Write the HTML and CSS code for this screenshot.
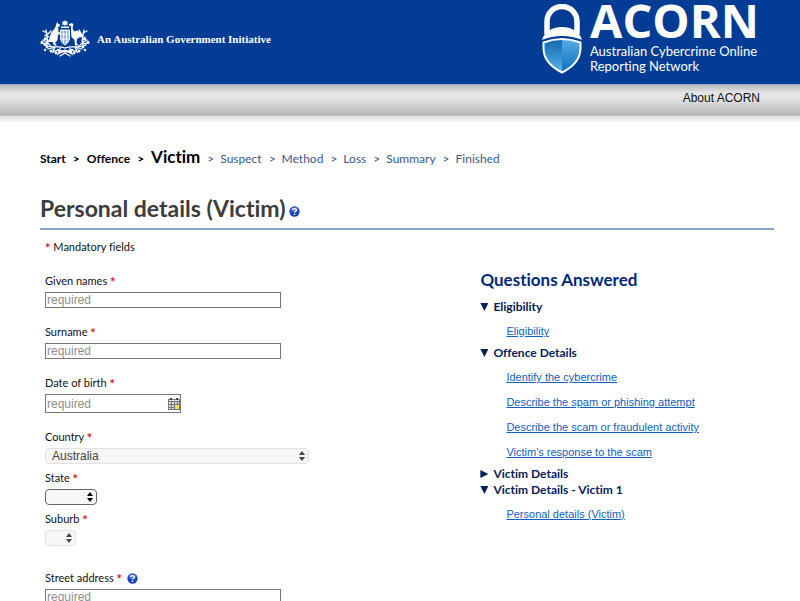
FILE: index.html
```html
<!DOCTYPE html>
<html lang="en">
<head>
<meta charset="utf-8">
<meta name="viewport" content="width=device-width, initial-scale=1">
<title>ACORN - Personal details (Victim)</title>
<link rel="stylesheet" href="styles.css">
</head>
<body>
<svg class="sprite">
  <symbol id="help" viewBox="0 0 12 12">
    <circle cx="6" cy="6" r="5.6" fill="#1d43b8"/>
    <ellipse cx="6" cy="3.5" rx="4" ry="2.5" fill="#5d83e0" opacity=".7"/>
    <path d="M4 4.600C4 2.300 8 2.300 8 4.500C8 5.800 6 5.800 6 7.200" fill="none" stroke="#fff" stroke-width="1.500"/>
    <circle cx="6" cy="9" r=".9" fill="#fff"/>
  </symbol>
  <symbol id="arrows" viewBox="0 0 6 10"><path d="M0 4L3 0L6 4ZM0 6H6L3 10Z" fill="currentColor"/></symbol>
</svg>
<header class="banner">
  <div class="gov">
    <svg class="arms" viewBox="0 0 50 38" aria-hidden="true">
      <g fill="#fff">
        <path d="M25 0L26 1.500L28 1.500L27.300 3L28 4.700L26 4.800L25 6L24 4.800L22 4.700L22.700 3L22 1.500L24 1.500Z"/>
        <path d="M21 6.500H29V8H21Z"/>
        <path d="M17 2L18.500 4L20 4.500L19.500 6.500L18 7L18.500 12L21.500 13L21 14.500L18 14.500L17.500 20L15 23L17 25.500H14L12.500 22L9 22L5 25.500L4 24.500L9 20L11 13L15 8Z"/>
        <path d="M29 4L32 3L33.500 4.500L32.500 8L34 11.500C38 9.500 42 12 43 18L40 17L37 19L36.500 23L39 25.500H35L34.500 20L31.500 17L31 11L31 6L29 5.500Z"/>
      </g>
      <path d="M20.500 10H29.500V19Q28.500 23 25 25Q21.500 23 20.500 19Z" fill="#9db8e6" stroke="#fff"/>
      <path d="M20.500 14.500H29.500M20.500 19H29.500M23.500 10V24M26.500 10V24" stroke="#fff" stroke-width=".8"/>
      <g fill="none" stroke="#fff" stroke-width="1.300" stroke-linecap="round">
        <path d="M4 25C12 29 18 25 25 28C32 25 38 29 46 25M3 20Q11 24 14 31M1 23L8 24M5 17L8 22L6 10M7 13L3 11M7 15L11 11M9 17L5 15M47 20Q39 24 36 31M49 23L42 24M45 17L42 22L44 10M43 13L47 11M42 15L39 10M8 29L15 27L13 32L20 29L18 34L25 30L32 34L30 29L37 32L35 27L42 29M20 36L25 33L30 36"/>
      </g>
      <g fill="#fff">
        <circle cx="2" cy="22" r="1.300"/><circle cx="5" cy="19" r="1.300"/><circle cx="7" cy="27" r="1.400"/><circle cx="5" cy="30" r="1.200"/><circle cx="11" cy="31" r="1.500"/><circle cx="16" cy="33" r="1.400"/><circle cx="20" cy="32" r="1.300"/>
        <circle cx="48" cy="22" r="1.300"/><circle cx="45" cy="19" r="1.300"/><circle cx="43" cy="27" r="1.400"/><circle cx="45" cy="30" r="1.200"/><circle cx="39" cy="31" r="1.500"/><circle cx="34" cy="33" r="1.400"/><circle cx="30" cy="32" r="1.300"/>
        <path d="M17 29Q25 32 33 29V31Q25 34 17 31Z"/>
      </g>
    </svg>
    <span class="gov-text">An Australian Government Initiative</span>
  </div>
  <div class="brand">
    <svg class="lock" viewBox="0 0 40 70" aria-hidden="true">
      <defs>
        <linearGradient id="left" x1="0" y1="0" x2="0" y2="1"><stop offset="0" stop-color="#1566b0"/><stop offset="1" stop-color="#53b4e8"/></linearGradient>
        <linearGradient id="right" x1="0" y1="0" x2="0" y2="1"><stop offset="0" stop-color="#5aaee6"/><stop offset="1" stop-color="#0b6bbd"/></linearGradient>
      </defs>
      <path d="M5 30V17.500A15 15 0 0 1 35 17.500V30" fill="none" stroke="#fff" stroke-width="5.500"/>
      <path d="M0 36C2 28.500 9 23 20 23S38 28.500 40 36Q20 28 0 36Z" fill="#fff"/>
      <path d="M1.500 38.500Q20 31.500 38.500 38.500V44C38.500 55 32 62.500 20 68.500C8 62.500 1.500 55 1.500 44Z" fill="url(#left)"/>
      <path d="M20 35Q30 35 38.500 38.500V44C38.500 55 32 62.500 20 68.500Z" fill="url(#right)"/>
      <path d="M1 36.500Q20 29.500 39 36.500" fill="none" stroke="#023c94" stroke-width="1.500"/>
      <path d="M1.500 38.500Q20 31.500 38.500 38.500V44C38.500 55 32 62.500 20 68.500C8 62.500 1.500 55 1.500 44Z" fill="none" stroke="#fff" stroke-width="2"/>
    </svg>
    <div>
      <div class="brand-name">ACORN</div>
      <div class="brand-sub">Australian Cybercrime Online<br>Reporting Network</div>
    </div>
  </div>
</header>
<nav class="topnav"><a href="#">About ACORN</a></nav>
<main class="page">
  <nav aria-label="Progress">
    <ol class="steps">
      <li class="done">Start</li>
      <li class="done">Offence</li>
      <li class="done"><span class="current">Victim</span></li>
      <li>Suspect</li>
      <li>Method</li>
      <li>Loss</li>
      <li>Summary</li>
      <li>Finished</li>
    </ol>
  </nav>
  <h1 class="title">Personal details (Victim)<button class="help" type="button" aria-label="Help"><svg><use href="#help"/></svg></button></h1>
  <div class="columns">
    <form class="form">
      <p class="note"><span class="star">*</span> Mandatory fields</p>
      <div class="field"><label for="given">Given names <span class="star">*</span></label><input id="given" class="text" type="text" placeholder="required"></div>
      <div class="field"><label for="surname">Surname <span class="star">*</span></label><input id="surname" class="text" type="text" placeholder="required"></div>
      <div class="field">
        <label for="dob">Date of birth <span class="star">*</span></label>
        <div class="date">
          <input id="dob" type="text" placeholder="required">
          <button type="button" aria-label="Choose date"><svg viewBox="0 0 12 12"><path d="M0 1H12V12H0Z" fill="#777"/><path d="M2 0H4V2H2ZM8 0H10V2H8Z" fill="#444"/><path d="M1 2H11V3H1ZM1 4H3V6H1ZM4 4H6V6H4ZM7 4H9V6H7ZM10 4H11V6H10ZM1 7H3V9H1ZM4 7H6V9H4ZM1 10H3V11H1ZM4 10H6V11H4Z" fill="#ddd"/><path d="M7 7H11V11H7Z" fill="#f3df62"/></svg></button>
        </div>
      </div>
      <div class="field tight"><label for="country">Country <span class="star">*</span></label><div class="select wide"><select id="country" disabled><option>Australia</option></select><svg><use href="#arrows"/></svg></div></div>
      <div class="field tight"><label for="state">State <span class="star">*</span></label><div class="select medium"><select id="state"><option></option></select><svg><use href="#arrows"/></svg></div></div>
      <div class="field last"><label for="suburb">Suburb <span class="star">*</span></label><div class="select small"><select id="suburb" disabled><option></option></select><svg><use href="#arrows"/></svg></div></div>
      <div class="field"><div class="label-row"><label for="street">Street address <span class="star">*</span></label><button class="help" type="button" aria-label="Help"><svg><use href="#help"/></svg></button></div><input id="street" class="text" type="text" placeholder="required"></div>
    </form>
    <aside class="answered">
      <h2>Questions Answered</h2>
      <details open><summary>Eligibility</summary>
        <ul><li><a href="#">Eligibility</a></li></ul>
      </details>
      <details open><summary>Offence Details</summary>
        <ul>
          <li><a href="#">Identify the cybercrime</a></li>
          <li><a href="#">Describe the spam or phishing attempt</a></li>
          <li><a href="#">Describe the scam or fraudulent activity</a></li>
          <li><a href="#">Victim's response to the scam</a></li>
        </ul>
      </details>
      <details><summary>Victim Details</summary></details>
      <details open><summary>Victim Details - Victim 1</summary>
        <ul><li><a href="#">Personal details (Victim)</a></li></ul>
      </details>
    </aside>
  </div>
</main>
</body>
</html>
```
FILE: styles.css
```css
* { box-sizing: border-box; }

body {
  margin: 0;
  height: 100vh;
  overflow: hidden;
  background: #fff;
  color: #111;
  font: 12px/16px Lato, "Open Sans", sans-serif;
  font-variant-ligatures: none;
}

.sprite { display: none; }

button {
  padding: 0;
  border: 0;
  background: none;
}

.banner {
  display: flex;
  justify-content: space-between;
  align-items: flex-start;
  height: 84px;
  padding: 4px 41px 0 40px;
  background: #023c94;
  color: #fff;
}

.gov {
  display: flex;
  align-items: center;
  gap: 7px;
  padding-top: 16px;
}

.arms { width: 50px; height: 38px; }

.gov-text {
  font: bold 11px/16px "Liberation Serif", serif;
}

.brand { display: flex; gap: 8px; }

.lock { width: 40px; height: 70px; }

.brand-name {
  margin-bottom: 8px;
  font: bold 47px/32px "Open Sans", sans-serif;
}

.brand-sub { font-size: 13px; line-height: 15px; }

.topnav {
  height: 39px;
  padding: 5px 40px 0;
  border-top: 1px solid #9aa9cc;
  background: linear-gradient(#b9b9b9 0, #e6e6e6 8px, #e2e2e2 14px, #bbb 29px, #aaa 30px, #dcdcdc 31px, #fff 38px);
  text-align: right;
}

.topnav a {
  color: #111;
  font: 12px/16px "Liberation Sans", sans-serif;
  text-decoration: none;
}

.page { padding: 24px 26px 0 40px; }

.steps {
  display: flex;
  align-items: baseline;
  margin: 0;
  padding: 0;
  list-style: none;
  color: #3b5a87;
  line-height: 20px;
}

.steps li + li::before {
  content: ">";
  margin: 0 7px;
}

.steps li:not(.done)::before { margin-right: 6px; }

.steps .done { color: #000; font-weight: bold; }
.steps .current { font-size: 17px; }

.title {
  margin: 23px 0 0;
  padding-bottom: 4px;
  border-bottom: 2px solid #86a3cc;
  color: #3c3c3c;
  font-size: 23px;
  line-height: 32px;
}

.title .help { margin-left: 3px; }

.help { width: 11px; height: 11px; line-height: 0; }
.help svg { width: 11px; height: 11px; }

.columns { display: grid; grid-template-columns: 3fr 2fr; }

.form { padding: 9px 5px 0; }

.note { margin: 0 0 18px; font-size: 11px; }

.star {
  color: #e0141e;
  font-size: 13px;
  font-weight: bold;
  line-height: 1;
  vertical-align: -2px;
}

.field {
  display: flex;
  flex-direction: column;
  align-items: flex-start;
  gap: 3px;
  margin-bottom: 16px;
}

.field.tight { margin-bottom: 6px; }
.field.last { margin-bottom: 24px; }

label { font-size: 11px; }

.label-row { display: flex; align-items: center; gap: 5px; }

input, select { font: 12px/14px "Liberation Sans", sans-serif; }

.text, .date { border: 1px solid #777; background: #fff; }

.text {
  width: 236px;
  height: 16px;
  padding: 0 1px;
}

input::placeholder { color: #909090; opacity: 1; }

.date {
  display: flex;
  align-items: center;
  width: 136px;
  height: 19px;
}

.date input {
  flex: 1;
  min-width: 0;
  padding: 0 1px;
  border: 0;
}

.date button, .date svg { display: block; width: 12px; height: 12px; }

.select { position: relative; }
.select.wide { width: 264px; }
.select.medium { width: 52px; }
.select.small { width: 31px; }

.select select {
  display: block;
  width: 100%;
  height: 16px;
  padding: 0 6px;
  border: 1px solid #e2e2e2;
  border-radius: 4px;
  background: #f7f7f7;
  color: #444;
  opacity: 1;
  appearance: none;
}

.select.medium select { border-color: #666; }

.select svg {
  position: absolute;
  top: 3px;
  right: 4px;
  width: 6px;
  height: 10px;
  color: #444;
  pointer-events: none;
}

.select.medium svg { color: #000; }

.answered { padding: 40px 0 0; color: #03205a; }

.answered h2 {
  margin: 0 0 9px;
  color: #02297c;
  font-size: 17px;
  line-height: 20px;
}

summary {
  display: flex;
  align-items: center;
  gap: 5px;
  font-weight: bold;
}

summary::before {
  content: "";
  width: 8px;
  height: 8px;
  background: #03205a;
  clip-path: polygon(0 0, 100% 50%, 0 100%);
}

details[open] > summary::before { clip-path: polygon(0 0, 100% 0, 50% 100%); }

.answered ul {
  display: grid;
  gap: 9px;
  margin: 0;
  padding: 8px 0 6px 26px;
  list-style: none;
}

.answered a {
  color: #1260c0;
  font: 11px/16px "Liberation Sans", sans-serif;
}
```
